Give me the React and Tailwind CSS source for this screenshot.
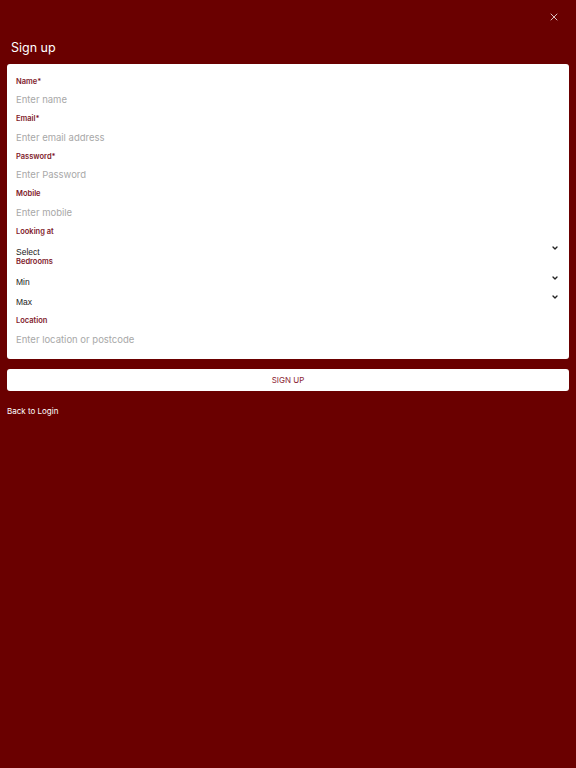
import React from 'react';
import { X, ChevronDown } from 'lucide-react';

function Field({ label, placeholder }) {
  return (
    <div>
      <div className="h-[12px] text-[7.5px] leading-[12px] font-semibold text-[#7e1a2a]">{label}</div>
      <div className="h-[25.5px] flex items-center text-[9.5px] text-[#a8a8a8]">{placeholder}</div>
    </div>
  );
}

function SelectRow({ value, h, textTop, chevTop }) {
  return (
    <div className={`flex justify-between ${h}`}>
      <span className={`${textTop} text-[8.5px] leading-[8px] font-normal text-[#222] font-[family-name:'Liberation_Sans',Arial,sans-serif]`}>{value}</span>
      <ChevronDown size={8} strokeWidth={4} className={`${chevTop} mr-[1px] text-[#222]`} />
    </div>
  );
}

export default function App() {
  return (
    <div className="min-h-[768px] w-full bg-[#6a0000] px-[7px] font-[family-name:Inter,'Noto_Sans',sans-serif]">
      <div className="flex justify-end pt-[11px] pr-[9px]">
        <X size={12} strokeWidth={1.5} className="text-white" />
      </div>
      <h1 className="mt-[17px] ml-[4px] text-[12.5px] leading-[16px] text-white">Sign up</h1>

      {/* FORM CARD */}
      <div className="mt-[8px] bg-white rounded-[3px] pt-[11.5px] pb-[6px] px-[9px]">
        <Field label="Name*" placeholder="Enter name" />
        <Field label="Email*" placeholder="Enter email address" />
        <Field label="Password*" placeholder="Enter Password" />
        <Field label="Mobile" placeholder="Enter mobile" />
        <div className="h-[12px] text-[7.5px] leading-[12px] font-semibold text-[#7e1a2a]">Looking at</div>
        <SelectRow value="Select" h="h-[18px]" textTop="pt-[10px]" chevTop="mt-[6px]" />
        <div className="h-[12px] text-[7.5px] leading-[12px] font-semibold text-[#7e1a2a]">Bedrooms</div>
        <SelectRow value="Min" h="h-[19.5px]" textTop="pt-[10.5px]" chevTop="mt-[6px]" />
        <SelectRow value="Max" h="h-[19.5px]" textTop="pt-[10.5px]" chevTop="mt-[6px]" />
        <div className="mt-[8.5px]">
          <Field label="Location" placeholder="Enter location or postcode" />
        </div>
      </div>

      <button className="mt-[10px] w-full h-[22px] bg-white rounded-[3px] text-[8px] text-[#8a2434] uppercase">
        Sign up
      </button>
      <div className="mt-[14px] text-[8px] leading-[12px] text-white">Back to Login</div>
    </div>
  );
}
